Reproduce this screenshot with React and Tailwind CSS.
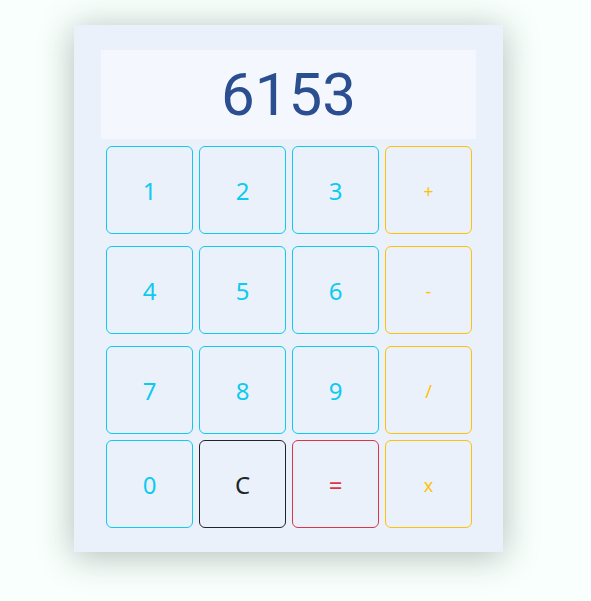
import React from "react"

const rows = [
  [
    { label: "1", kind: "num" },
    { label: "2", kind: "num" },
    { label: "3", kind: "num" },
    { label: "+", kind: "op" },
  ],
  [
    { label: "4", kind: "num" },
    { label: "5", kind: "num" },
    { label: "6", kind: "num" },
    { label: "-", kind: "op" },
  ],
  [
    { label: "7", kind: "num" },
    { label: "8", kind: "num" },
    { label: "9", kind: "num" },
    { label: "/", kind: "op" },
  ],
  [
    { label: "0", kind: "num" },
    { label: "C", kind: "clear" },
    { label: "=", kind: "eq" },
    { label: "x", kind: "op" },
  ],
]

const kindStyles = {
  num: "border-[#0dcaf0] text-[#0dcaf0] text-[24px]",
  op: "border-[#ffc107] text-[#ffc107] text-[18px]",
  clear: "border-[#212529] text-[#212529] text-[24px]",
  eq: "border-[#dc3545] text-[#dc3545] text-[24px]",
}

function Key({ label, kind }) {
  return (
    <button
      className={
        "w-[87px] h-[88px] rounded-[6px] border bg-transparent flex items-center justify-center leading-none pt-[2px] " +
        kindStyles[kind]
      }
    >
      {label}
    </button>
  )
}

export default function App() {
  return (
    <div
      className="min-h-[601px] w-full bg-[#f8fffc] pt-[25px] pl-[74px]"
      style={{ fontFamily: '"Noto Sans", "Open Sans", sans-serif' }}
    >
      <div className="w-[429px] h-[527px] bg-[#ebf1fb] shadow-[0_4px_32px_rgba(40,60,50,0.34)] pt-[25px] pl-[27px]">
        <div
          className="w-[375px] h-[89px] bg-[#f4f7fd] flex items-center justify-center text-[60px] text-[#2a4e90]"
          style={{ fontFamily: 'Roboto, "Noto Sans", sans-serif' }}
        >
          6153
        </div>
        <div className="mt-[7px] ml-[5px] flex flex-col">
          {rows.map((row, i) => (
            <div
              key={i}
              className={"flex gap-[6px] " + (i < 2 ? "mb-[12px]" : i === 2 ? "mb-[6px]" : "")}
            >
              {row.map((k) => (
                <Key key={k.label} {...k} />
              ))}
            </div>
          ))}
        </div>
      </div>
    </div>
  )
}
